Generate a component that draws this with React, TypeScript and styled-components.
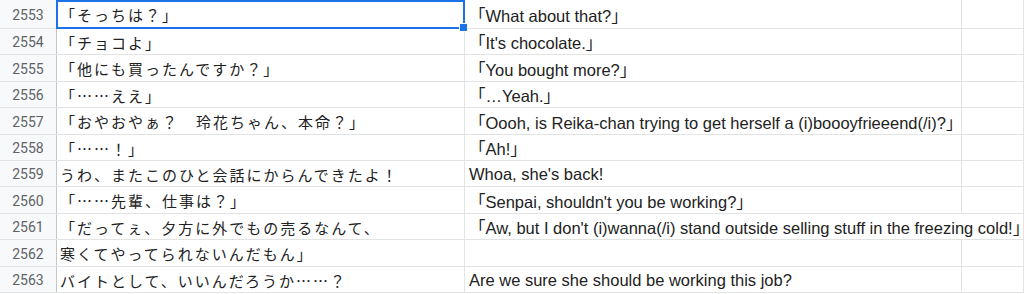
import styled, { createGlobalStyle } from "styled-components";

const GlobalStyle = createGlobalStyle`
  html, body {
    margin: 0;
    padding: 0;
    background: #ffffff;
    overflow: hidden;
  }
`;

type Line = { num: number; ja: string; en: string; spill?: boolean };

// rows of the translation sheet
const lines: Line[] = [
  { num: 2553, ja: "「そっちは？」", en: "「What about that?」" },
  { num: 2554, ja: "「チョコよ」", en: "「It's chocolate.」" },
  { num: 2555, ja: "「他にも買ったんですか？」", en: "「You bought more?」" },
  { num: 2556, ja: "「……ええ」", en: "「…Yeah.」" },
  {
    num: 2557,
    ja: "「おやおやぁ？　玲花ちゃん、本命？」",
    en: "「Oooh, is Reika-chan trying to get herself a (i)boooyfrieeend(/i)?」",
  },
  { num: 2558, ja: "「……！」", en: "「Ah!」" },
  { num: 2559, ja: "うわ、またこのひと会話にからんできたよ！", en: "Whoa, she's back!" },
  { num: 2560, ja: "「……先輩、仕事は？」", en: "「Senpai, shouldn't you be working?」" },
  {
    num: 2561,
    ja: "「だってぇ、夕方に外でもの売るなんて、",
    en: "「Aw, but I don't (i)wanna(/i) stand outside selling stuff in the freezing cold!」",
    spill: true,
  },
  { num: 2562, ja: "寒くてやってられないんだもん」", en: "" },
  { num: 2563, ja: "バイトとして、いいんだろうか……？", en: "Are we sure she should be working this job?" },
];

// row bottoms measured off the sheet (about 26.4px per row)
const bottoms = [28, 54, 81, 107, 134, 160, 186, 213, 239, 266, 292];

const Sheet = styled.div`
  width: 1024px;
  display: flex;
  flex-direction: column;
`;

const Row = styled.div<{ $h: number }>`
  display: grid;
  grid-template-columns: 57px 408px 497px 1fr;
  height: ${(p) => p.$h}px;
  box-sizing: border-box;
  border-bottom: 1px solid #e2e3e3;
`;

const RowHeader = styled.div`
  display: flex;
  align-items: center;
  justify-content: center;
  background: #f8f9fa;
  border-right: 1px solid #c4c7c5;
  color: #5f6368;
  font-family: Roboto, "Liberation Sans", sans-serif;
  font-size: 14px;
  padding-top: 1px;
`;

const Cell = styled.div<{ $selected?: boolean; $ja?: boolean }>`
  position: relative;
  display: flex;
  align-items: center;
  padding: 1px 3px 0 ${(p) => (p.$ja ? "3px" : "4px")};
  border-right: 1px solid #e2e3e3;
  color: #222222;
  white-space: nowrap;
  overflow: ${(p) => (p.$selected ? "visible" : "hidden")};
  font-family: ${(p) =>
    p.$ja
      ? '"Noto Sans CJK JP", sans-serif'
      : '"Liberation Sans", Arial, "Noto Sans CJK JP", sans-serif'};
  font-size: ${(p) => (p.$ja ? "15px" : "16.5px")};
  letter-spacing: ${(p) => (p.$ja ? "2px" : "0")};
  z-index: ${(p) => (p.$selected ? 2 : 1)};
`;

// english text runs on into the next column when it is too long
const EnCell = styled(Cell)<{ $spill?: boolean }>`
  overflow: visible;
  border-right-color: ${(p) => (p.$spill ? "transparent" : "#e2e3e3")};
`;

const Selection = styled.div`
  position: absolute;
  left: -1px;
  top: 0;
  right: -1px;
  bottom: -1px;
  border: 2px solid #1a73e8;
  pointer-events: none;
`;

const Handle = styled.div`
  position: absolute;
  right: -5px;
  bottom: -5px;
  width: 7px;
  height: 7px;
  background: #1a73e8;
  border: 1px solid #ffffff;
`;

const App = () => {
  return (
    <Sheet>
      <GlobalStyle />
      {lines.map((l, i) => {
        const h = i === 0 ? bottoms[0] + 1 : bottoms[i] - bottoms[i - 1];
        const selected = i === 0;
        return (
          <Row key={l.num} $h={h}>
            <RowHeader>{l.num}</RowHeader>
            <Cell $ja $selected={selected}>
              {l.ja}
              {selected && (
                <Selection>
                  <Handle />
                </Selection>
              )}
            </Cell>
            <EnCell $spill={l.spill}>{l.en}</EnCell>
            <Cell />
          </Row>
        );
      })}
    </Sheet>
  );
};

export default App;
